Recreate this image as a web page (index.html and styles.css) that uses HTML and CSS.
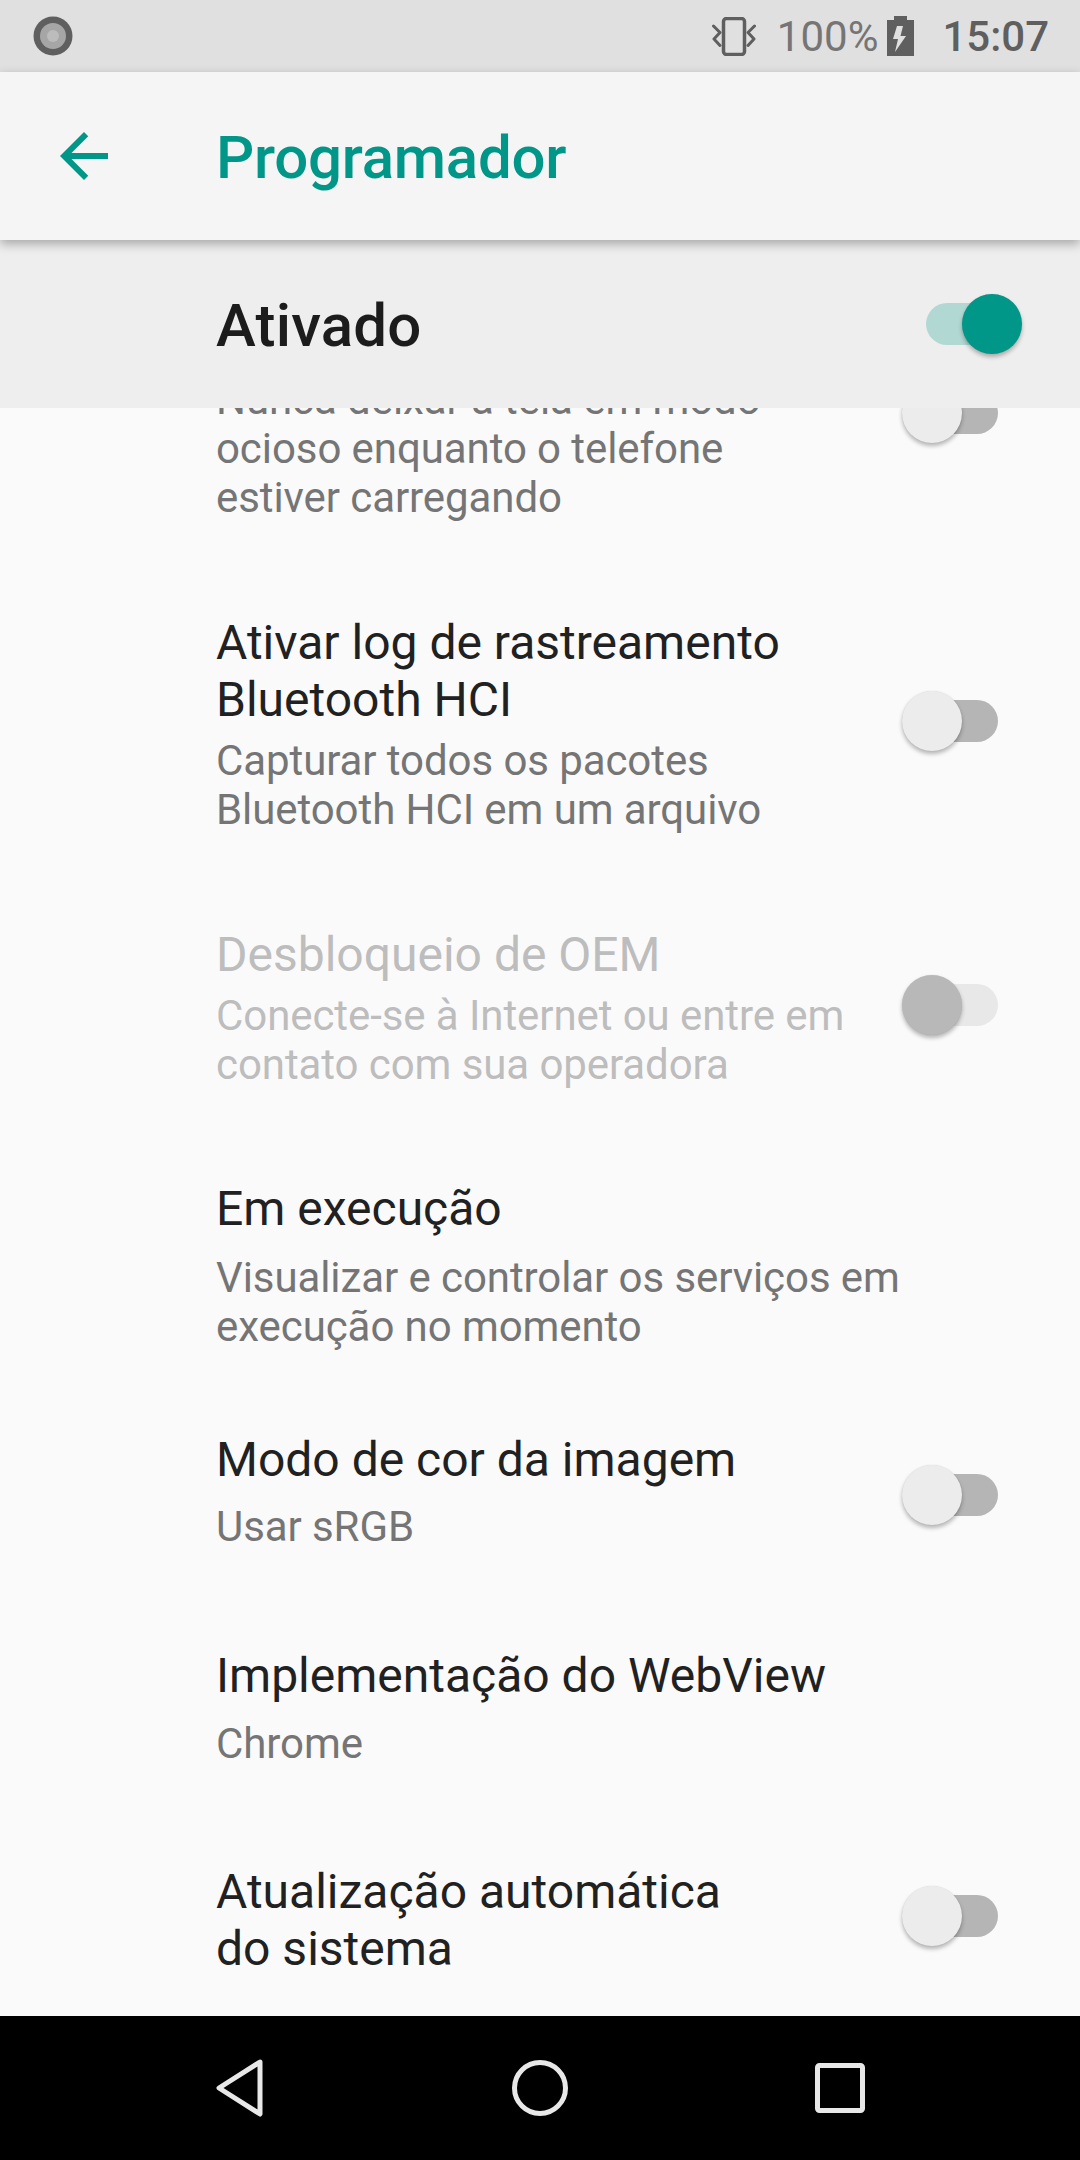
FILE: index.html
```html
<!DOCTYPE html>
<html lang="pt">
<head>
<meta charset="utf-8">
<title>Programador</title>
<link rel="stylesheet" href="styles.css">
</head>
<body>
<div class="screen">
  <header class="status">
    <svg class="dot" width="40" height="40" viewBox="0 0 40 40"><circle cx="20" cy="20" r="19.5" fill="#5f5f5f"/><circle cx="20" cy="20" r="13" fill="#a6a6a6"/><circle cx="20" cy="20" r="6" fill="#bcbcbc"/></svg>
    <div class="status-right">
      <svg class="vib" width="44" height="39" viewBox="0 0 44 39"><rect x="11.500" y="1.500" width="21" height="36" rx="3" fill="none" stroke="#5f5f5f" stroke-width="3.500"/><path d="M1.500 9 8 15.500 2 22 8 28.500M42.500 9 36 15.500 42 22 36 28.500" fill="none" stroke="#5f5f5f" stroke-width="3" stroke-linecap="round" stroke-linejoin="round"/></svg>
      <span class="pct">100%</span>
      <svg class="bat" width="27" height="40" viewBox="0 0 27 40"><path fill="#5f5f5f" fill-rule="evenodd" d="M7 0h13v4h7v36H0V4h7zM10 10h6l-2.500 10H19L8 36l3-13H6z"/></svg>
      <span class="clock">15:07</span>
    </div>
  </header>
  <div class="appbar">
    <svg class="back" width="72" height="72" viewBox="0 0 24 24"><path fill="#009688" d="M20 11H7.830l5.590-5.590L12 4l-8 8 8 8 1.410-1.410L7.830 13H20v-2z"/></svg>
    <h1 class="title">Programador</h1>
  </div>
  <div class="master">
    <span class="master-label">Ativado</span>
    <span class="switch on"><i class="track"></i><i class="thumb"></i></span>
  </div>
  <main class="list">
    <section class="row first">
      <div class="text">
        <div class="sum">Nunca deixar a tela em modo<br>ocioso enquanto o telefone<br>estiver carregando</div>
      </div>
      <span class="switch"><i class="track"></i><i class="thumb"></i></span>
    </section>
    <section class="row bt">
      <div class="text">
        <div class="name">Ativar log de rastreamento<br>Bluetooth HCI</div>
        <div class="sum">Capturar todos os pacotes<br>Bluetooth HCI em um arquivo</div>
      </div>
      <span class="switch"><i class="track"></i><i class="thumb"></i></span>
    </section>
    <section class="row disabled">
      <div class="text">
        <div class="name">Desbloqueio de OEM</div>
        <div class="sum">Conecte-se à Internet ou entre em<br>contato com sua operadora</div>
      </div>
      <span class="switch off-disabled"><i class="track"></i><i class="thumb"></i></span>
    </section>
    <section class="row wide running">
      <div class="text">
        <div class="name">Em execução</div>
        <div class="sum">Visualizar e controlar os serviços em<br>execução no momento</div>
      </div>
    </section>
    <section class="row wide color">
      <div class="text">
        <div class="name">Modo de cor da imagem</div>
        <div class="sum">Usar sRGB</div>
      </div>
      <span class="switch"><i class="track"></i><i class="thumb"></i></span>
    </section>
    <section class="row wide webview">
      <div class="text">
        <div class="name">Implementação do WebView</div>
        <div class="sum">Chrome</div>
      </div>
    </section>
    <section class="row update">
      <div class="text">
        <div class="name">Atualização automática<br>do sistema</div>
      </div>
      <span class="switch"><i class="track"></i><i class="thumb"></i></span>
    </section>
  </main>
  <nav class="navbar">
    <svg width="52" height="60" viewBox="0 0 52 60"><path d="M46 4 5 30l41 26z" fill="none" stroke="#e8e8e8" stroke-width="5" stroke-linejoin="round"/></svg>
    <svg width="56" height="56" viewBox="0 0 56 56"><circle cx="28" cy="28" r="25.500" fill="none" stroke="#e8e8e8" stroke-width="5"/></svg>
    <svg width="50" height="50" viewBox="0 0 50 50"><rect x="2.500" y="2.500" width="45" height="45" rx="2" fill="none" stroke="#e8e8e8" stroke-width="5"/></svg>
  </nav>
</div>
</body>
</html>
```
FILE: styles.css
```css
* { box-sizing: border-box; }
html, body { margin: 0; padding: 0; }
body { font-family: Roboto, "Noto Sans", sans-serif; background: #fafafa; }
.screen { width: 1080px; height: 2160px; display: flex; flex-direction: column; overflow: hidden; }

.status { height: 72px; flex: none; background: #e0e0e0; display: flex; align-items: center; justify-content: space-between; padding: 0 31px 0 33px; }
.status-right { display: flex; align-items: center; }
.vib { margin-right: 21px; }
.pct { font-size: 42px; color: #757575; line-height: 72px; padding-top: 2px; }
.bat { margin-left: 9px; margin-right: 28px; }
.clock { font-size: 42px; font-weight: 500; color: #5f5f5f; line-height: 72px; padding-top: 2px; }

.appbar { height: 168px; flex: none; background: #f5f5f5; display: flex; align-items: center; padding-left: 48px; box-shadow: 0 4px 10px rgba(0,0,0,.3); position: relative; z-index: 3; }
.back { flex: none; }
.title { margin: 0 0 0 96px; padding-top: 2px; font-size: 60px; font-weight: 500; color: #009688; letter-spacing: -.25px; }

.master { height: 168px; flex: none; background: #eeeeee; display: flex; align-items: center; justify-content: space-between; padding: 0 58px 0 216px; position: relative; z-index: 2; }
.master-label { font-size: 60px; font-weight: 500; color: #1c1c1c; padding-top: 2px; letter-spacing: .2px; }

.list { flex: 1; min-height: 0; overflow: hidden; background: #fafafa; }
.row { display: flex; align-items: center; justify-content: space-between; padding: 46px 58px 46px 216px; }
.row .switch { margin-bottom: 6px; }
.row.first { margin-top: -33px; padding-top: 0; align-items: flex-start; }
.row.first .sum { margin-top: 0; }
.row.first .switch { margin-top: 8px; margin-bottom: 0; }
.row.bt .name, .row.update .name { line-height: 57px; }
.row.bt .sum { margin-top: 8px; }
.row.update .switch { margin-bottom: 8px; }
.text { min-width: 0; }
.name { font-size: 48px; line-height: 58px; color: #212121; }
.sum { font-size: 42px; line-height: 49px; color: #757575; margin-top: 5px; letter-spacing: -.08px; }
.disabled .name, .disabled .sum { color: #bdbdbd; }
.disabled { padding-bottom: 45px; }
.disabled .sum { margin-top: 7px; }
.row.wide .sum { margin-top: 13px; }
.row.running { padding-bottom: 34px; }
.row.running .sum { margin-top: 15px; }
.row.color { padding-bottom: 50px; }
.row.color .switch { margin-top: 8px; margin-bottom: 0; }
.row.webview { padding-bottom: 49px; }
.row.webview .sum { margin-top: 14px; }

.switch { position: relative; flex: none; display: block; width: 120px; height: 60px; }
.track { position: absolute; left: 24px; top: 9px; width: 72px; height: 42px; border-radius: 21px; background: #b5b5b5; }
.thumb { position: absolute; left: 0; top: 0; width: 60px; height: 60px; border-radius: 50%; background: #ececec; box-shadow: 0 3px 4px rgba(0,0,0,.28), 0 0 1px rgba(0,0,0,.12); }
.switch.on .track { background: #b2d8d4; }
.switch.on .thumb { left: 60px; background: #009688; }
.switch.off-disabled .track { background: #e8e8e8; }
.switch.off-disabled .thumb { background: #b8b8b8; }

.navbar { height: 144px; flex: none; background: #000; display: grid; grid-template-columns: repeat(3, 300px); padding: 0 90px; align-items: center; justify-items: center; }
```
